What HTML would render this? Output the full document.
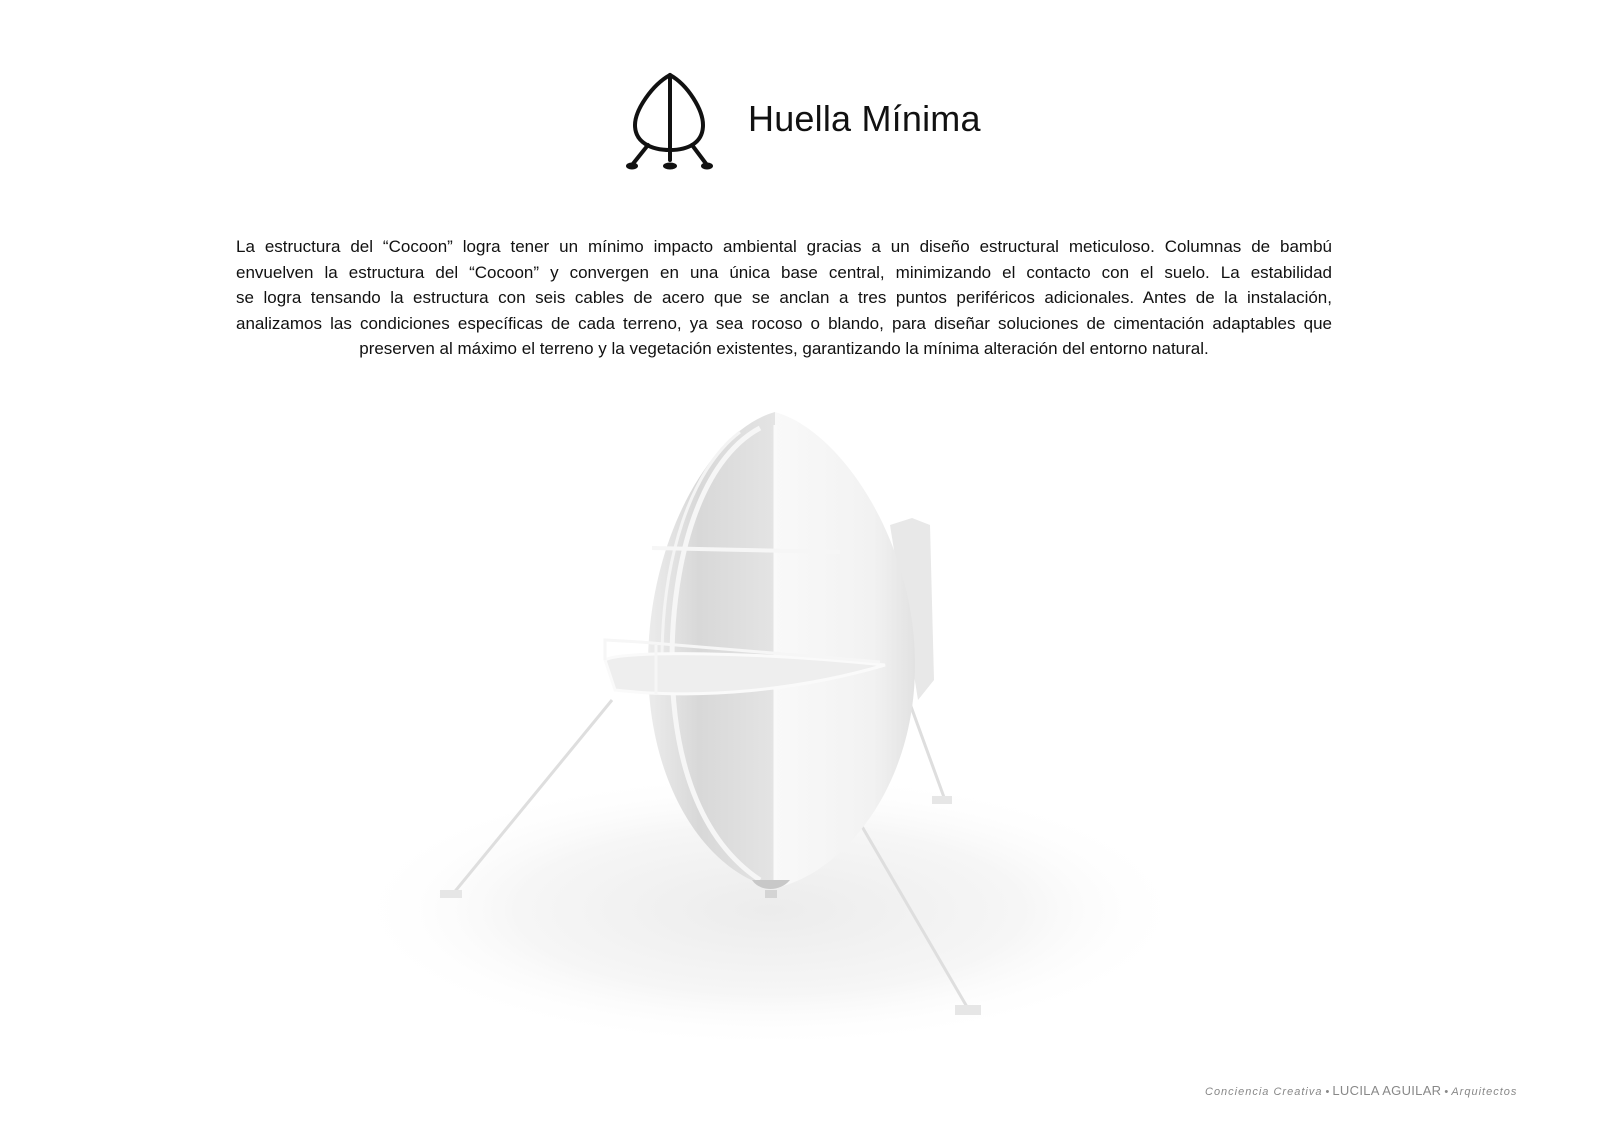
<!DOCTYPE html>
<html><head><meta charset="utf-8"><style>
html,body{margin:0;padding:0;background:#fff}
body{width:1600px;height:1131px;position:relative;overflow:hidden;font-family:"Liberation Sans",sans-serif;color:#111}
.title{position:absolute;left:748px;top:98px;font-size:36px;letter-spacing:0.2px}
.p{position:absolute;left:236px;width:1096px;top:234px;font-size:17px;line-height:25.6px}
.p div{text-align:justify;text-align-last:justify;white-space:nowrap}
.p div.l{text-align-last:center;text-align:center}
.foot{position:absolute;left:1205px;top:1083px;font-size:11px;color:#888;white-space:nowrap}
.foot i{letter-spacing:1px}
.foot span{font-size:13px;letter-spacing:0.3px}
</style></head><body>
<svg style="position:absolute;left:0;top:0" width="1600" height="1131">
<defs>
<radialGradient id="sh" cx="0.5" cy="0.5" r="0.5"><stop offset="0" stop-color="#ececec"/><stop offset="0.6" stop-color="#f6f6f6"/><stop offset="1" stop-color="#fff" stop-opacity="0"/></radialGradient>
<linearGradient id="rh" x1="0" x2="1"><stop offset="0" stop-color="#f9f9f9"/><stop offset="0.7" stop-color="#f2f2f2"/><stop offset="1" stop-color="#e2e2e2"/></linearGradient>
<linearGradient id="lh" x1="0" x2="1"><stop offset="0" stop-color="#ececec"/><stop offset="0.4" stop-color="#d8d8d8"/><stop offset="1" stop-color="#e4e4e4"/></linearGradient>
</defs>
<!-- logo -->
<g fill="none" stroke="#111" stroke-width="4" stroke-linecap="round">
<path d="M670 75 C652 85 635 110 635 125 C635 143 652 150 670 150 C688 150 703 143 703 125 C703 110 688 85 670 75 Z"/>
<line x1="670" y1="75" x2="670" y2="160"/>
<line x1="648" y1="145" x2="632" y2="165"/>
<line x1="692" y1="145" x2="707" y2="165"/>
</g>
<g fill="#111"><ellipse cx="632" cy="166" rx="6" ry="3.5"/><ellipse cx="670" cy="166" rx="7" ry="3.5"/><ellipse cx="707" cy="166" rx="6" ry="3.5"/></g>
<!-- shadow -->
<ellipse cx="770" cy="910" rx="420" ry="140" fill="url(#sh)"/>
<!-- legs/cables -->
<g stroke="#dedede" stroke-width="3" fill="none">
<line x1="612" y1="700" x2="452" y2="895"/>
<line x1="800" y1="720" x2="970" y2="1012"/>
<line x1="905" y1="690" x2="945" y2="800"/>
</g>
<rect x="440" y="890" width="22" height="8" fill="#e6e6e6"/>
<rect x="955" y="1005" width="26" height="10" fill="#e6e6e6"/>
<rect x="932" y="796" width="20" height="8" fill="#e6e6e6"/>
<!-- back box -->
<path d="M890 525 L912 518 L930 525 L934 680 L918 700 Z" fill="#e8e8e8"/>
<!-- egg right -->
<path d="M775 412 C840 430 915 540 915 665 C915 790 840 875 775 888 Z" fill="url(#rh)"/>
<!-- egg left -->
<path d="M775 412 C710 430 648 540 648 665 C648 790 710 875 775 888 Z" fill="url(#lh)"/>
<path d="M760 428 C700 460 672 560 672 660 C672 760 700 840 760 880" fill="none" stroke="#f6f6f6" stroke-width="5"/>
<path d="M740 432 C690 470 662 560 662 660" fill="none" stroke="#f4f4f4" stroke-width="3"/>
<line x1="775" y1="425" x2="775" y2="885" stroke="#fafafa" stroke-width="3"/>
<!-- shelf -->
<line x1="652" y1="548" x2="840" y2="552" stroke="#f6f6f6" stroke-width="4"/>
<!-- balcony -->
<path d="M605 660 C620 650 760 652 885 665 C800 690 700 700 615 690 Z" fill="#eeeeee" stroke="#fafafa" stroke-width="3"/>
<path d="M605 660 L605 640 L640 642 L880 662" fill="none" stroke="#f6f6f6" stroke-width="3"/>
<line x1="656" y1="645" x2="656" y2="695" stroke="#f6f6f6" stroke-width="3"/>
<!-- base -->
<path d="M752 880 C760 892 780 892 790 880 Z" fill="#c8c8c8"/>
<rect x="765" y="890" width="12" height="8" fill="#d4d4d4"/>
</svg>
<div class="title">Huella Mínima</div>
<div class="p">
<div>La estructura del “Cocoon” logra tener un mínimo impacto ambiental gracias a un diseño estructural meticuloso. Columnas de bambú</div>
<div>envuelven la estructura del “Cocoon” y convergen en una única base central, minimizando el contacto con el suelo. La estabilidad</div>
<div>se logra tensando la estructura con seis cables de acero que se anclan a tres puntos periféricos adicionales. Antes de la instalación,</div>
<div>analizamos las condiciones específicas de cada terreno, ya sea rocoso o blando, para diseñar soluciones de cimentación adaptables que</div>
<div class="l">preserven al máximo el terreno y la vegetación existentes, garantizando la mínima alteración del entorno natural.</div>
</div>
<div class="foot"><i>Conciencia Creativa</i> • <span>LUCILA AGUILAR</span> • <i>Arquitectos</i></div>
</body></html>
